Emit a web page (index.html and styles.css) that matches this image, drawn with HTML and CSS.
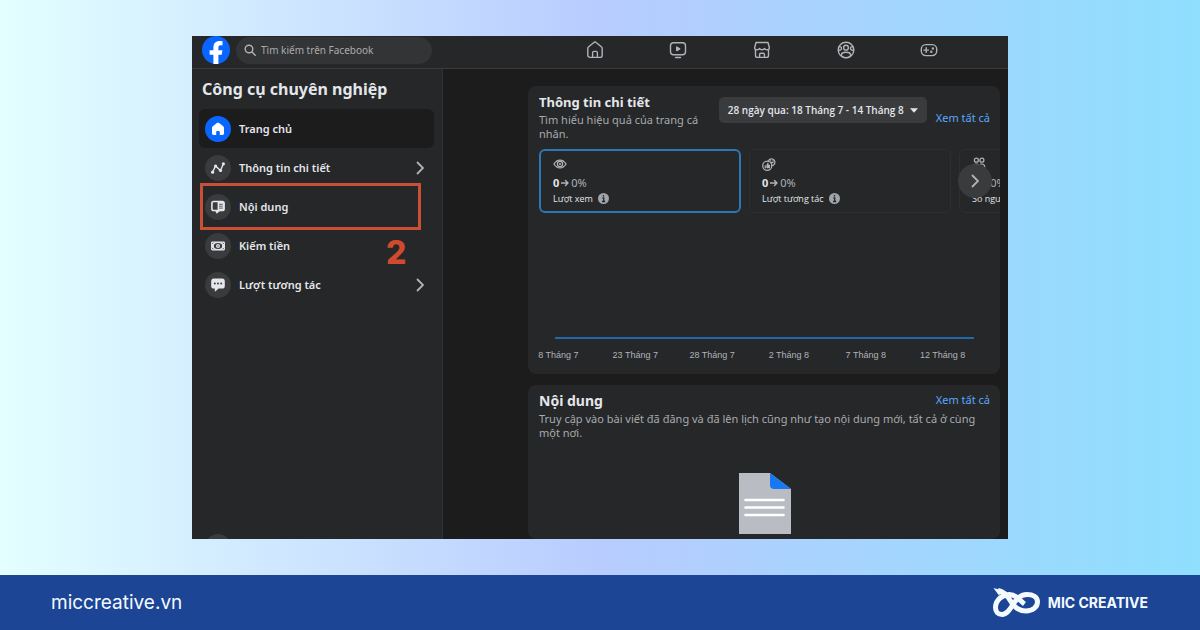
FILE: index.html
```html
<!DOCTYPE html>
<html lang="vi">
<head>
<meta charset="utf-8">
<meta name="viewport" content="width=device-width, initial-scale=1">
<title>Công cụ chuyên nghiệp</title>
<link rel="stylesheet" href="styles.css">
</head>
<body>
<div class="stage">
  <div class="app">
    <header class="topbar">
      <a class="brand" href="#" aria-label="Facebook">
        <svg viewBox="0 0 28 28" width="28" height="28"><circle cx="14" cy="14" r="14" fill="#0866ff"/><path d="M11.400 28v-9.200H7.600v-4.600h3.800v-2.500c0-4.500 2.200-6.700 6.500-6.700.9 0 2 .1 2.600.3v4.100c-.5-.1-1.100-.1-1.700-.1-1.700 0-2.400.7-2.400 2.500v2.400h4l-.7 4.600h-3.300V28z" fill="#fff"/></svg>
      </a>
      <label class="search">
        <svg class="line" viewBox="0 0 12 12" width="12" height="12"><circle cx="5" cy="5" r="3.800"/><path d="M8 8l3.200 3.200"/></svg>
        <input type="search" placeholder="Tìm kiếm trên Facebook" aria-label="Tìm kiếm trên Facebook">
      </label>
      <nav class="tabs">
        <a href="#" aria-label="Trang chủ"><svg class="line" viewBox="0 0 18 18" width="18" height="18"><path d="M1.800 7.600c0-.8.3-1.400.9-1.900l4.900-4c.8-.7 2-.7 2.800 0l4.900 4c.6.5.9 1.100.9 1.900v6.600c0 1.300-1 2.200-2.200 2.200H4c-1.200 0-2.200-.9-2.200-2.200z"/><path d="M6.600 16.400v-4.700c0-.8.600-1.300 1.300-1.300h2.200c.7 0 1.300.5 1.300 1.300v4.700"/></svg></a>
        <a href="#" aria-label="Video"><svg class="line" viewBox="0 0 18 18" width="18" height="18"><rect x="1.500" y="1.800" width="15" height="12" rx="3"/><path d="M6.500 16.500h5"/><path class="solid" d="M7.700 6v3.600l3-1.800z"/></svg></a>
        <a href="#" aria-label="Marketplace"><svg class="line" viewBox="0 0 18 18" width="18" height="18"><path d="M3 1.500h12l1.300 5c.2 1.500-.8 2.300-2.200 2.300-1.300 0-2.300-.6-2.500-1.400-.4.800-1.400 1.400-2.600 1.400s-2.200-.6-2.600-1.400C6.200 8.200 5.200 8.800 3.900 8.800 2.500 8.800 1.500 8 1.700 6.500z"/><path d="M2.500 9v5.400c0 1.200.8 2 2 2h9c1.200 0 2-.8 2-2V9M6.600 16.400v-3c0-.7.500-1.200 1.200-1.200h2.400c.7 0 1.200.5 1.200 1.200v3"/></svg></a>
        <a href="#" aria-label="Nhóm"><svg class="line" viewBox="0 0 18 18" width="18" height="18"><circle cx="9" cy="9" r="7.800"/><circle cx="9" cy="6.700" r="2.400"/><ellipse cx="9" cy="13.900" rx="4.600" ry="2.700"/><path d="M2.300 5.600c1.500-.1 2.200.7 2.200 1.800s-.9 1.900-2.600 1.800M15.700 5.600c-1.500-.1-2.200.7-2.200 1.800s.9 1.900 2.600 1.800"/></svg></a>
        <a href="#" aria-label="Trò chơi"><svg class="line" viewBox="0 0 18 18" width="18" height="18"><rect x="1.300" y="3.600" width="15.400" height="11" rx="4.500"/><path d="M6.200 6.800v4.600M3.900 9.100h4.600"/><circle class="solid" cx="12.900" cy="7.500" r=".5"/><circle class="solid" cx="11.300" cy="10.700" r=".5"/></svg></a>
      </nav>
    </header>

    <aside class="sidebar">
      <h1 class="sidebar-title">Công cụ chuyên nghiệp</h1>
      <nav class="menu">
        <a class="item active" href="#">
          <span class="badge"><svg viewBox="0 0 16 16" width="16" height="16"><path d="M2 6.900c0-.6.300-1.200.8-1.600L6.900 2c.6-.5 1.600-.5 2.200 0l4.100 3.300c.5.400.8 1 .8 1.600v5.300c0 1-.8 1.800-1.800 1.800H9.800v-3c0-.5-.4-.9-.9-.9H7.100c-.5 0-.9.4-.9.9v3H3.800c-1 0-1.800-.8-1.800-1.800z" fill="#fff"/></svg></span>
          <span class="name">Trang chủ</span>
        </a>
        <a class="item" href="#">
          <span class="badge"><svg viewBox="0 0 16 16" width="16" height="16" stroke="#e4e6eb" stroke-width="1.400" fill="none"><path d="M2.600 12.200L5.500 6l5 4.500 3-7"/><g fill="#e4e6eb" stroke="none"><circle cx="2.600" cy="12.200" r="1.600"/><circle cx="5.600" cy="6" r="1.600"/><circle cx="10.500" cy="10.500" r="1.600"/><circle cx="13.400" cy="3.800" r="1.600"/></g></svg></span>
          <span class="name">Thông tin chi tiết</span>
          <svg class="chev" viewBox="0 0 8 14" width="8" height="14"><path d="M1 1l6 6-6 6"/></svg>
        </a>
        <a class="item marked" href="#">
          <span class="badge"><svg viewBox="0 0 16 16" width="16" height="16"><rect x="1.900" y="2.500" width="12.200" height="9" rx="1.800" fill="none" stroke="#e4e6eb" stroke-width="1.600"/><path d="M5 11.500h5.500l-3.800 3.200z" fill="#e4e6eb"/><path d="M7.600 2.500H12.500c1 0 1.500.6 1.500 1.600v5.800c0 1-.5 1.600-1.500 1.600H7.600z" fill="#e4e6eb"/><path d="M9 5.300h3.800M9 7.200h3.800M9 9.100h3.800" stroke="#3a3b3c" stroke-width=".8"/></svg></span>
          <span class="name">Nội dung</span>
          <span class="step">2</span>
        </a>
        <a class="item" href="#">
          <span class="badge"><svg viewBox="0 0 16 16" width="16" height="16"><rect x="1" y="3.500" width="14" height="9" rx="1.400" fill="#e4e6eb"/><ellipse cx="8" cy="8" rx="4.200" ry="3" fill="#3a3b3c"/><circle cx="8" cy="8" r="2" fill="#e4e6eb"/><circle cx="8" cy="8" r=".7" fill="#3a3b3c"/><path d="M2 6.200l1.500-1.500M14 6.200l-1.500-1.500M2 9.800l1.500 1.500M14 9.800l-1.500 1.500" stroke="#3a3b3c" stroke-width=".8"/></svg></span>
          <span class="name">Kiếm tiền</span>
        </a>
        <a class="item" href="#">
          <span class="badge"><svg viewBox="0 0 16 16" width="16" height="16"><path d="M3.600 1.600h8.800c1.400 0 2.400 1 2.400 2.400v5.200c0 1.400-1 2.400-2.400 2.400H8.600l-3 2.700c-.4.300-.8.100-.8-.4v-2.300H3.600c-1.400 0-2.400-1-2.400-2.400V4c0-1.400 1-2.400 2.400-2.400z" fill="#e4e6eb"/><g fill="#3a3b3c"><circle cx="4.800" cy="6.600" r="1"/><circle cx="8" cy="6.600" r="1"/><circle cx="11.200" cy="6.600" r="1"/></g></svg></span>
          <span class="name">Lượt tương tác</span>
          <svg class="chev" viewBox="0 0 8 14" width="8" height="14"><path d="M1 1l6 6-6 6"/></svg>
        </a>
      </nav>
      <span class="badge peek"></span>
    </aside>

    <main class="content">
      <section class="card insights">
        <div class="card-head">
          <div class="heading">
            <h2>Thông tin chi tiết</h2>
            <p>Tìm hiểu hiệu quả của trang cá nhân.</p>
          </div>
          <button class="range" type="button">28 ngày qua: 18 Tháng 7 - 14 Tháng 8
            <svg viewBox="0 0 8 5" width="8" height="5"><path d="M0 .3h8L4 4.800z" fill="#e4e6eb"/></svg>
          </button>
          <a class="more" href="#">Xem tất cả</a>
        </div>
        <div class="carousel">
          <article class="metric selected">
            <svg class="line" viewBox="0 0 16 16" width="14" height="14"><path d="M1 8c3.800-6 10.200-6 14 0-3.800 6-10.200 6-14 0z"/><circle cx="8" cy="8" r="3"/><circle class="solid" cx="8" cy="8" r=".5"/></svg>
            <p class="value"><b>0</b> <svg class="line" viewBox="0 0 8 8" width="8" height="8"><path d="M0 4h7M4.500 1.500L7 4 4.500 6.500"/></svg>0%</p>
            <p class="label">Lượt xem <svg viewBox="0 0 11 11" width="11" height="11"><circle cx="5.500" cy="5.500" r="5.500" fill="#a0a4ab"/><path d="M5.500 2v1.500M4.400 5h1.300v3.500M4 8.500h3.200" stroke="#252728" stroke-width="1.300" fill="none"/></svg></p>
          </article>
          <article class="metric">
            <svg class="line" viewBox="0 0 16 16" width="14" height="14"><path d="M7.300 4.300a3.900 3.900 0 1 1 4.200 5.500"/><path d="M9.600 3.700h.2M12.600 3.700h.2M9.800 5.800c1 .9 2 .9 2.900-.1"/><circle cx="6" cy="10" r="5.200"/><g fill="#b0b3b8" stroke="none"><path d="M3 9.300h1.400v3.500H3zM5 9.300l1.500-3c1 0 1.200.8.800 2.500h1.900v4H5z"/></g></svg>
            <p class="value"><b>0</b> <svg class="line" viewBox="0 0 8 8" width="8" height="8"><path d="M0 4h7M4.500 1.500L7 4 4.500 6.500"/></svg> 0%</p>
            <p class="label">Lượt tương tác <svg viewBox="0 0 11 11" width="11" height="11"><circle cx="5.500" cy="5.500" r="5.500" fill="#a0a4ab"/><path d="M5.500 2v1.500M4.400 5h1.300v3.500M4 8.500h3.200" stroke="#252728" stroke-width="1.300" fill="none"/></svg></p>
          </article>
          <article class="metric">
            <svg class="line" viewBox="0 0 16 16" width="14" height="14"><circle cx="5" cy="3.600" r="2.300"/><circle cx="11.300" cy="3.600" r="2.300"/><path d="M1.500 12c0-5 7-5 7 0zM10 8.200c3-.8 4.600 1 4.600 3.500h-3"/></svg>
            <p class="value"><b>0</b> <svg class="line" viewBox="0 0 8 8" width="8" height="8"><path d="M0 4h7M4.500 1.500L7 4 4.500 6.500"/></svg> 0%</p>
            <p class="label">Số người</p>
          </article>
          <button class="next" type="button" aria-label="Tiếp"><svg class="chev" viewBox="0 0 8 14" width="8" height="14"><path d="M1 1l6 6-6 6"/></svg></button>
        </div>
        <div class="plot"></div>
        <div class="axis"><span>8 Tháng 7</span><span>23 Tháng 7</span><span>28 Tháng 7</span><span>2 Tháng 8</span><span>7 Tháng 8</span><span>12 Tháng 8</span></div>
      </section>

      <section class="card posts">
        <div class="card-row">
          <h2>Nội dung</h2>
          <a class="more" href="#">Xem tất cả</a>
        </div>
        <p>Truy cập vào bài viết đã đăng và đã lên lịch cũng như tạo nội dung mới, tất cả ở cùng một nơi.</p>
        <svg class="doc" viewBox="0 0 52 61" width="52" height="61"><path d="M0 0h31l21 16v45H0z" fill="#b9bdc3"/><path d="M31 0l21 16H35c-2.500 0-4-1.500-4-4z" fill="#1877f2"/><path d="M6.500 27h38M6.500 34.500h38M6.500 42h38" stroke="#fff" stroke-width="2.600" stroke-linecap="round"/></svg>
      </section>
    </main>
  </div>
</div>
<footer class="footer">
  <a class="site" href="#">miccreative.vn</a>
  <div class="mic">
    <svg viewBox="0 0 48 30" width="48" height="30" fill="none" stroke="#f4fbff" stroke-width="5"><path d="M6 2.500c6 1.500 8.500 4 11 8 3 5 7 12.500 17 12.500 6.500 0 11.500-4 11.500-9S41 6.500 35 6.500C21 6.500 20 26.500 10 26.500c-4 0-6.500-3-6.500-7C3.500 11.500 11 6.500 17.500 6.500c7 0 10 6 15 9.500"/><path d="M1.500 0l9 2.500-3.500 5z" fill="#f4fbff" stroke="none"/></svg>
    <strong>MIC CREATIVE</strong>
  </div>
</footer>
</body>
</html>
```
FILE: styles.css
```css
* { box-sizing: border-box; }
body {
  margin: 0;
  min-height: 100vh;
  display: grid;
  grid-template-rows: 1fr auto;
  font-family: "Noto Sans", "Open Sans", sans-serif;
  color: #e4e6eb;
  background: linear-gradient(90deg, #e3ffff 0%, #b8ccff 50%, #8fdfff 100%);
}
h1, h2, p { margin: 0; }
a { color: inherit; text-decoration: none; }
button { border: 0; padding: 0; font: inherit; color: inherit; }
svg { display: block; flex: none; }
.line { fill: none; stroke: #b0b3b8; stroke-width: 1.4; stroke-linejoin: round; stroke-linecap: round; }
.line .solid { fill: #b0b3b8; }
.chev { fill: none; stroke: #b0b3b8; stroke-width: 1.8; }

.stage { display: grid; padding: 36px 16%; }
.app {
  display: grid;
  grid-template-columns: 251px 1fr;
  grid-template-rows: 33px 1fr;
  overflow: hidden;
  background: #1c1c1d;
}
.topbar {
  grid-column: 1 / -1;
  display: flex;
  align-items: center;
  padding: 0 37px 4px 10px;
  background: #252728;
  border-bottom: 1px solid #3a3b3c;
}
.search {
  display: flex;
  align-items: center;
  gap: 5px;
  width: 196px;
  height: 27px;
  margin-left: 6px;
  padding: 0 8px;
  border-radius: 14px;
  background: #333435;
}
.search input {
  min-width: 0;
  flex: 1;
  border: 0;
  padding: 0;
  outline: 0;
  background: none;
  font: 10px "Noto Sans", sans-serif;
  color: #e4e6eb;
}
.search input::placeholder { color: #a8abaf; opacity: 1; }
.tabs { flex: 1; display: flex; justify-content: space-around; margin-left: 121px; }

.sidebar {
  display: flex;
  flex-direction: column;
  padding: 9px 8px 0 7px;
  overflow: hidden;
  background: #252728;
  border-right: 1px solid #303132;
}
.sidebar-title { padding-left: 3px; font-size: 16px; line-height: 22px; font-weight: 700; }
.menu { margin-top: 9px; }
.item {
  position: relative;
  display: flex;
  align-items: center;
  gap: 8px;
  height: 39px;
  padding: 0 10px 0 6px;
  border-radius: 6px;
  font-size: 11px;
  font-weight: 600;
}
.item .chev { margin-left: auto; }
.badge {
  display: grid;
  place-items: center;
  flex: none;
  width: 26px;
  height: 26px;
  border-radius: 50%;
  background: #3a3b3c;
}
.active { background: #1c1c1d; }
.active .badge { background: #0866ff; }
.marked::after {
  content: "";
  position: absolute;
  inset: -4px 13px -4px 1px;
  border: 3px solid #c94f35;
}
.step {
  position: absolute;
  top: 46px;
  left: 187px;
  font: 800 32px/40px Inter, sans-serif;
  color: #d24a2e;
}
.peek { margin: auto 0 -21px 6px; }

.content {
  display: flex;
  flex-direction: column;
  gap: 11px;
  min-height: 0;
  padding: 17px 8px 0 85px;
  overflow: hidden;
}
.card { flex: none; border-radius: 8px; background: #252728; overflow: hidden; }
.card h2 { font-size: 13px; line-height: 18px; font-weight: 700; }
.card .heading p, .posts p { font-size: 11px; line-height: 14px; color: #a8abaf; }
.more { font-size: 11px; line-height: 16px; color: #5aa7ff; white-space: nowrap; }

.insights { height: 288px; padding: 7px 0 0 11px; }
.card-head { display: flex; padding-right: 10px; }
.heading { flex: 1; padding-right: 8px; }
.heading p, .posts p { margin-top: 2px; }
.range {
  display: flex;
  align-items: center;
  justify-content: center;
  gap: 6px;
  width: 208px;
  height: 26px;
  margin: 4px 9px 0 0;
  border-radius: 5px;
  background: #3a3b3c;
  font: 600 10px "Open Sans", sans-serif;
  white-space: nowrap;
}
.card-head .more { margin-top: 17px; }
.carousel { position: relative; display: flex; gap: 8px; margin-top: 8px; overflow: hidden; }
.metric {
  flex: none;
  width: 202px;
  height: 64px;
  padding: 7px 12px;
  border: 1px solid #2d2f30;
  border-radius: 6px;
}
.selected { border: 2px solid #2f76b5; padding: 6px 12px; }
.value { display: flex; align-items: center; gap: 2px; margin-top: 4px; font-size: 11px; line-height: 16px; color: #b0b3b8; }
.value b { color: #e4e6eb; }
.label { display: flex; align-items: center; gap: 5px; font: 9px/15px "Open Sans", sans-serif; }
.next {
  position: absolute;
  right: 8px;
  top: 15px;
  display: grid;
  place-items: center;
  width: 34px;
  height: 34px;
  border-radius: 50%;
  background: #3a3b3c;
}
.plot { height: 126px; margin: 0 26px 0 16px; border-bottom: 2px solid #2268ad; }
.axis {
  display: grid;
  grid-template-columns: repeat(6, 1fr);
  margin: 10px 19px 0 -19px;
  text-align: center;
  font: 9px/12px "Liberation Sans", Arial, sans-serif;
  color: #b0b3b8;
}

.posts { padding: 7px 10px 5px 11px; }
.posts h2 { font-size: 14px; }
.card-row { display: flex; justify-content: space-between; }
.doc { margin: 33px auto 0; }

.footer {
  display: flex;
  align-items: center;
  justify-content: space-between;
  height: 55px;
  padding: 0 52px 0 51px;
  background: #1c4595;
  color: #f4fbff;
}
.site { font: 19px Inter, sans-serif; }
.mic { display: flex; align-items: center; gap: 8px; font: 14px Inter, sans-serif; }
```
